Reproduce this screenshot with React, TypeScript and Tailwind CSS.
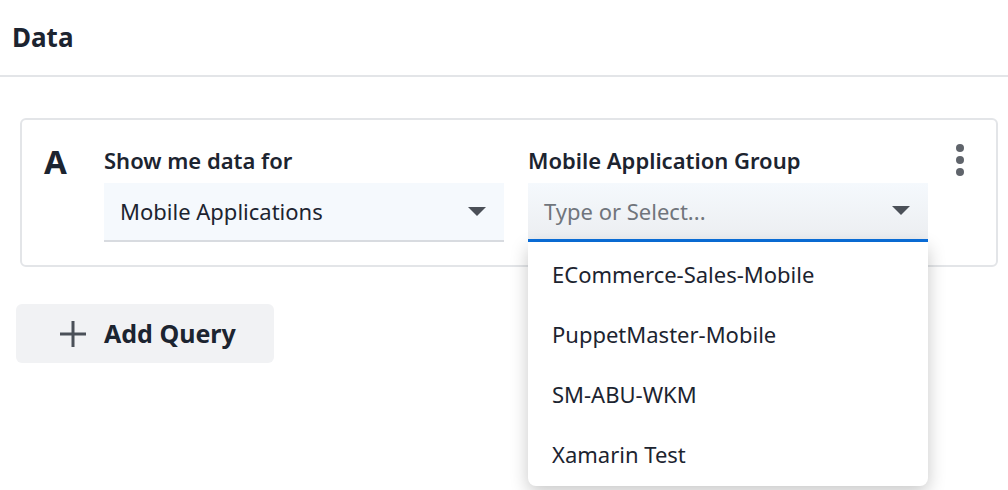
const options = ['ECommerce-Sales-Mobile', 'PuppetMaster-Mobile', 'SM-ABU-WKM', 'Xamarin Test']

function Caret() {
  return (
    <svg width="18" height="10" viewBox="0 0 18 10" className="shrink-0">
      <path d="M0 0 L18 0 L9 9 Z" fill="#4b5058" />
    </svg>
  )
}

export default function App() {
  return (
    <div className="h-[490px] w-[1008px] overflow-hidden bg-white text-[#1c2430] font-['Liberation_Sans']">
      <div className="flex h-[77px] items-center border-b-2 border-[#e3e5e8] pl-3">
        <h1 className="text-[26px] font-bold">Data</h1>
      </div>

      <div className="px-[20px] pt-[41px]">
        <div className="flex h-[149px] w-[978px] rounded-md border-2 border-[#e3e5e8] pl-[22px] pt-[22px]">
          <div className="w-[60px] text-[33px] font-bold leading-[40px]">A</div>
          <div className="w-[400px]">
            <div className="h-[41px] text-[22px] font-semibold leading-[36px]">Show me data for</div>
            <div className="flex h-[59px] items-center justify-between border-b-2 border-[#d8dbe0] bg-[#f5f9fd] pl-4 pr-[18px]">
              <span className="text-[22px]">Mobile Applications</span>
              <Caret />
            </div>
          </div>
          <div className="relative ml-[24px] w-[400px]">
            <div className="h-[41px] text-[22px] font-semibold leading-[36px]">Mobile Application Group</div>
            <div className="flex h-[59px] items-center justify-between border-b-[3px] border-[#0a6fdc] bg-gradient-to-b from-[#f5f9fd] to-[#eceef1] pl-4 pr-[18px]">
              <span className="text-[22px] text-[#70757c]">Type or Select...</span>
              <Caret />
            </div>
            <div className="absolute left-0 top-[100px] z-10 w-[400px] rounded-b-lg bg-white py-[2px] shadow-[0_6px_18px_rgba(0,0,0,0.22)]">
              {options.map((o) => (
                <div key={o} className="flex h-[60px] items-center px-6 text-[22px]">
                  {o}
                </div>
              ))}
            </div>
          </div>
          <div className="ml-[28px] flex flex-col gap-[4px] pt-[2px]">
            <span className="h-[8px] w-[8px] rounded-full bg-[#5f646b]" />
            <span className="h-[8px] w-[8px] rounded-full bg-[#5f646b]" />
            <span className="h-[8px] w-[8px] rounded-full bg-[#5f646b]" />
          </div>
        </div>

        <button className="-ml-1 mt-[37px] flex h-[59px] w-[258px] items-center gap-[16px] rounded-md bg-[#f1f2f4] pl-[42px]">
          <svg width="30" height="30" viewBox="0 0 30 30">
            <path d="M15 2 V28 M2 15 H28" stroke="#4b5058" strokeWidth="3" />
          </svg>
          <span className="text-[25px] font-bold">Add Query</span>
        </button>
      </div>
    </div>
  )
}
